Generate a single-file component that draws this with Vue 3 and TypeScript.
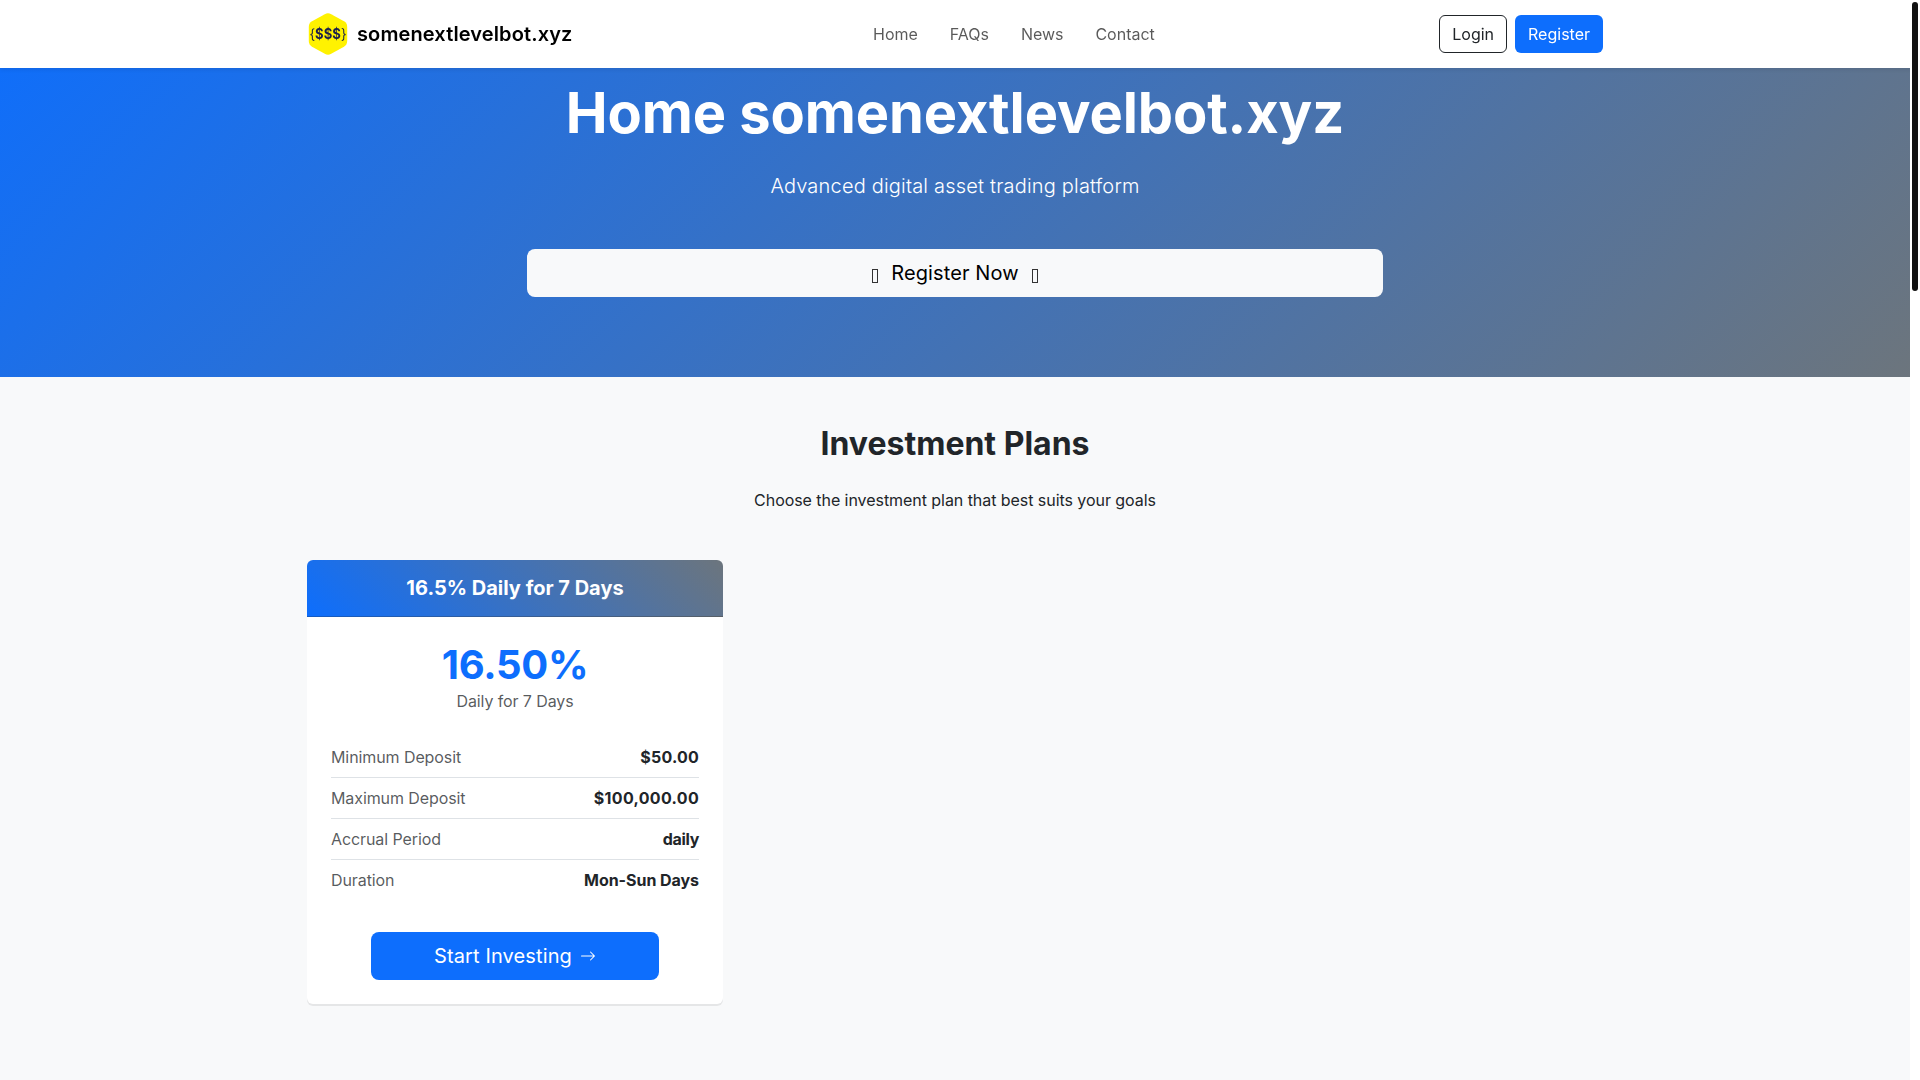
<script setup lang="ts">
interface PlanRow {
  label: string;
  value: string;
  tracking: string;
}

const links: string[] = ['Home', 'FAQs', 'News', 'Contact'];

const rows: PlanRow[] = [
  { label: 'Minimum Deposit', value: '$50.00', tracking: '0.2px' },
  { label: 'Maximum Deposit', value: '$100,000.00', tracking: '0.32px' },
  { label: 'Accrual Period', value: 'daily', tracking: '-0.3px' },
  { label: 'Duration', value: 'Mon-Sun Days', tracking: '-0.05px' },
];
</script>

<template>
  <div class="page">
    <header class="topbar">
      <div class="container topbar-inner">
        <a class="brand">
          <svg class="logo" width="42" height="42" viewBox="0 0 42 42">
            <path d="M17.800 1.200q3.200-1.700 6.400 0L37 8.300q3.200 1.900 3.200 5.600v14.200q0 3.700-3.200 5.600l-12.800 7.100q-3.200 1.700-6.400 0L5 33.700q-3.200-1.900-3.200-5.600V13.900Q1.800 10.200 5 8.300z" fill="#fff200" />
            <text x="21" y="26" text-anchor="middle" textLength="37" lengthAdjust="spacingAndGlyphs" font-size="14" fill="#1b1f4b">{<tspan font-weight="700">$$$</tspan>}</text>
          </svg>
          <span>somenextlevelbot.xyz</span>
        </a>
        <nav class="nav">
          <a v-for="link in links" :key="link">{{ link }}</a>
        </nav>
        <div class="actions">
          <button class="btn btn-outline">Login</button>
          <button class="btn btn-primary">Register</button>
        </div>
      </div>
    </header>

    <section class="hero">
      <h1>Home somenextlevelbot.xyz</h1>
      <p>Advanced digital asset trading platform</p>
      <button class="btn btn-lg btn-light"><i class="glyph"></i><span>Register Now</span><i class="glyph"></i></button>
    </section>

    <section class="container plans">
      <h2>Investment Plans</h2>
      <p class="intro">Choose the investment plan that best suits your goals</p>
      <article class="card">
        <h5 class="card-header">16.5% Daily for 7 Days</h5>
        <div class="card-body">
          <div class="rate">16.50%</div>
          <div class="rate-note">Daily for 7 Days</div>
          <ul>
            <li v-for="row in rows" :key="row.label">
              <span>{{ row.label }}</span>
              <strong :style="{ letterSpacing: row.tracking }">{{ row.value }}</strong>
            </li>
          </ul>
          <button class="btn btn-lg btn-primary btn-invest">
            <span>Start Investing</span>
            <svg width="16" height="16" viewBox="0 0 16 16" fill="currentColor">
              <path fill-rule="evenodd" d="M1 8a.5.5 0 0 1 .5-.5h11.793l-3.147-3.146a.5.5 0 0 1 .708-.708l4 4a.5.5 0 0 1 0 .708l-4 4a.5.5 0 0 1-.708-.708L13.293 8.500H1.500A.5.5 0 0 1 1 8" />
            </svg>
          </button>
        </div>
      </article>
    </section>
    <div class="scrollbar"><div class="thumb"></div></div>
  </div>
</template>

<style>
body {
  margin: 0;
  overflow: hidden;
}
</style>

<style scoped>
.page {
  box-sizing: border-box;
  height: 100vh;
  padding-right: 10px;
  overflow: hidden;
  background: linear-gradient(#f8f9fa, #f8f9fa) no-repeat 0 0 / calc(100% - 10px) 100%, #fff;
  color: #212529;
  font: 400 16px/1.5 Inter, sans-serif;
}
.page *,
.page *::before {
  box-sizing: border-box;
}
h1, h2, h5, p, ul {
  margin: 0;
  padding: 0;
}
.container {
  width: 1296px;
  margin: 0 auto;
}
.topbar {
  position: fixed;
  inset: 0 0 auto 0;
  z-index: 10;
  height: 68px;
  padding-right: 10px;
  background: #fff;
  box-shadow: 0 2px 4px rgba(0, 0, 0, 0.075);
}
.topbar-inner {
  display: flex;
  align-items: center;
  justify-content: space-between;
  height: 68px;
}
.brand {
  display: flex;
  align-items: center;
  gap: 8px;
  margin-right: 16px;
  color: #000;
  font-size: 20px;
  font-weight: 600;
  letter-spacing: 0.12px;
}
.logo {
  display: block;
  letter-spacing: 0;
  font-weight: 400;
}
.nav {
  display: flex;
  gap: 32px;
  color: rgba(0, 0, 0, 0.65);
  letter-spacing: -0.02px;
}
.actions {
  display: flex;
  gap: 8px;
}
.btn {
  padding: 6px 12px;
  border: 1px solid transparent;
  border-radius: 6px;
  font: inherit;
  text-align: center;
}
.btn-outline {
  border-color: #212529;
  background: transparent;
  color: #212529;
}
.btn-primary {
  background: #0d6efd;
  color: #fff;
}
.btn-lg {
  padding: 8px 16px;
  border-radius: 8px;
  font-size: 20px;
  letter-spacing: 0.12px;
}
.hero {
  display: flex;
  flex-direction: column;
  align-items: center;
  padding: 80px 0;
  background: linear-gradient(135deg, #0d6efd 0%, #6c757d 100%);
  color: #fff;
}
.hero h1 {
  margin-bottom: 24px;
  font-size: 56px;
  font-weight: 700;
  line-height: 1.2;
  letter-spacing: -0.1px;
}
.hero p {
  margin-bottom: 48px;
  font-size: 20px;
  font-weight: 300;
  letter-spacing: 0.19px;
}
.btn-light {
  display: flex;
  align-items: center;
  justify-content: center;
  gap: 13px;
  width: 856px;
  background: #f8f9fa;
  color: #000;
}
.glyph {
  width: 6px;
  height: 14px;
  margin-top: 6px;
  border: 1px solid #333;
}
.plans {
  padding: 48px 0;
}
.plans h2 {
  margin-bottom: 24px;
  font-size: 32px;
  font-weight: 700;
  line-height: 1.2;
  text-align: center;
}
.intro {
  margin-bottom: 48px;
  letter-spacing: -0.055px;
  text-align: center;
}
.card {
  width: 416px;
  border-radius: 6px;
  background: #fff;
  box-shadow: 0 2px 0 rgba(0, 0, 0, 0.075);
}
.card-header {
  padding: 16px;
  border-bottom: 1px solid rgba(0, 0, 0, 0.175);
  border-radius: 6px 6px 0 0;
  background: linear-gradient(45deg, #0d6efd, #6c757d);
  color: #fff;
  font-size: 20px;
  font-weight: 700;
  line-height: 1.2;
  text-align: center;
}
.card-body {
  padding: 24px;
  text-align: center;
}
.rate {
  color: #0d6efd;
  font-size: 40px;
  font-weight: 700;
  line-height: 1.2;
  letter-spacing: -0.3px;
}
.rate-note {
  margin-bottom: 24px;
  color: rgba(33, 37, 41, 0.75);
  letter-spacing: -0.1px;
}
ul {
  margin-bottom: 32px;
  list-style: none;
}
li {
  display: flex;
  justify-content: space-between;
  padding: 8px 0;
}
li + li {
  border-top: 1px solid #dee2e6;
}
li span {
  color: rgba(33, 37, 41, 0.75);
  letter-spacing: -0.09px;
}
li strong {
  font-weight: 700;
}
.btn-invest {
  display: flex;
  align-items: center;
  justify-content: center;
  gap: 8px;
  width: 288px;
  margin: 0 auto;
}
/* overlay scrollbar, above the header */
.scrollbar {
  position: fixed;
  top: 0;
  right: 0;
  z-index: 20;
  width: 10px;
  height: 100%;
  padding: 2px 2px 0;
  background: #fff;
}
.thumb {
  width: 6px;
  height: 289px;
  border-radius: 3px;
  background: #111;
}
</style>
